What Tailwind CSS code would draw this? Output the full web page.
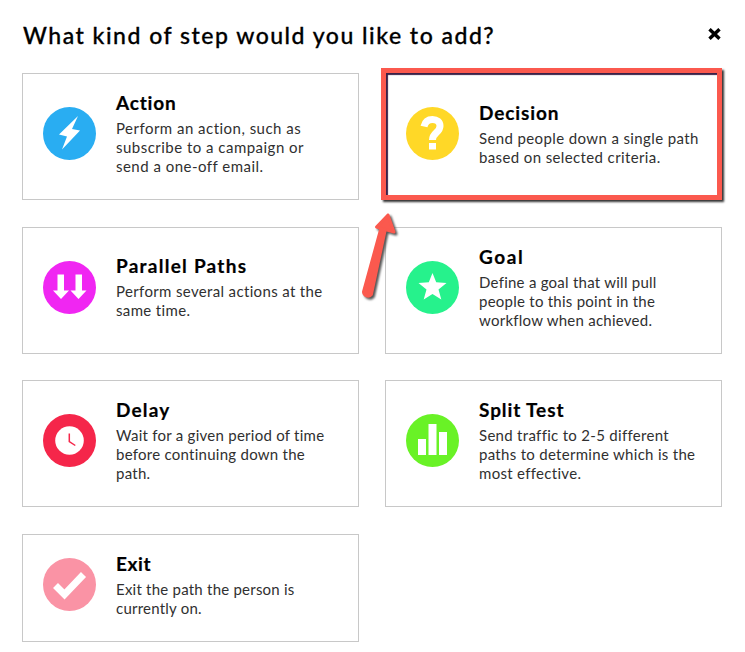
<!DOCTYPE html>
<html lang="en">
<head>
  <meta charset="UTF-8" />
  <meta name="viewport" content="width=device-width, initial-scale=1.0" />
  <title>Add a step</title>
  <script src="https://cdn.jsdelivr.net/npm/@tailwindcss/browser@4"></script>
</head>
<body class="bg-white font-['Lato',sans-serif] text-[#303030] w-[745px] h-[652px] overflow-hidden relative">
  <div class="pl-[22px] pr-[23px]">
    <header class="flex items-center justify-between h-[73px] pr-px pb-1">
      <h1 class="text-[23px] leading-none font-medium text-black tracking-[1.5px] pl-px pt-px whitespace-nowrap [-webkit-text-stroke:0.3px_#000]">What kind of step would you like to add?</h1>
      <button aria-label="Close" class="-mt-[2px]">
        <svg class="w-[13px] h-[12px]" viewBox="0 0 13 12" fill="none" stroke="#000" stroke-width="3.4"><path d="M1.500 1.200l10 9.600M11.500 1.200l-10 9.600" /></svg>
      </button>
    </header>

    <main class="grid grid-cols-[337px_337px] gap-x-[26px] gap-y-[26.67px] text-[15px] leading-[19px]">
      <section class="h-[127px] border border-[#c8c8c8] flex items-center gap-5 pl-5 pb-[6px]">
        <svg class="size-[53px] shrink-0" viewBox="0 0 53 53"><circle cx="26.5" cy="26.5" r="26.5" fill="#29adf2" /><path d="M35 9L16 27.500l8 2L19 42.500 37 23.500l-8-1.500z" fill="#fff" /></svg>
        <div class="whitespace-nowrap">
          <h2 class="text-[19px] leading-[26px] -mt-px mb-[3px] font-bold text-black tracking-[0.8px] [-webkit-text-stroke:0.2px_#000]">Action</h2>
          <p class="tracking-[0.48px]">Perform an action, such as<br>subscribe to a campaign or<br>send a one-off email.</p>
        </div>
      </section>

      <section class="h-[127px] border border-[#c8c8c8] flex items-center gap-5 pl-5 pb-[6px] relative">
        <div class="absolute -left-[5px] -top-[6px] w-[341px] h-[132px] border-[5px] border-[#fb594e] shadow-[2px_2px_2px_#333,inset_2px_2px_1px_#3a2148]"></div>
        <svg class="size-[53px] shrink-0" viewBox="0 0 53 53"><circle cx="26.5" cy="26.5" r="26.5" fill="#ffd827" /><path d="M18 19.500c1-4.500 4-7 8.500-7 4.500 0 7.500 2.500 7.500 6.500 0 7-7.500 6.500-7.500 14" fill="none" stroke="#fff" stroke-width="7" /><path d="M23 36h7v6.500h-7z" fill="#fff" /></svg>
        <div class="whitespace-nowrap">
          <h2 class="text-[19px] leading-[26px] -mt-px mb-[3px] font-bold text-black tracking-[0.9px] [-webkit-text-stroke:0.2px_#000]">Decision</h2>
          <p class="tracking-[0.38px]">Send people down a single path<br>based on selected criteria.</p>
        </div>
      </section>

      <section class="h-[127px] border border-[#c8c8c8] flex items-center gap-5 pl-5 pb-[6px]">
        <svg class="size-[53px] shrink-0" viewBox="0 0 53 53"><circle cx="26.5" cy="26.5" r="26.5" fill="#f026f2" /><path d="M14.500 13.500h6.500v16h5L18 38l-8-8.500h4.500zM32.500 13.500h6.500v16h4.500L35.500 38l-8-8.500h5z" fill="#fff" /></svg>
        <div class="whitespace-nowrap">
          <h2 class="text-[19px] leading-[26px] -mt-px mb-[3px] font-bold text-black tracking-[1.25px] [-webkit-text-stroke:0.2px_#000]">Parallel Paths</h2>
          <p class="tracking-[0.35px]">Perform several actions at the<br>same time.</p>
        </div>
      </section>

      <section class="h-[127px] border border-[#c8c8c8] flex items-center gap-5 pl-5 pb-[6px]">
        <svg class="size-[53px] shrink-0" viewBox="0 0 53 53"><circle cx="26.5" cy="26.5" r="26.5" fill="#26f28c" /><path d="M26.500 12l3.700 9.300 10.300.6-8 6.500 2.800 10.100-8.800-5.600-8.800 5.600 2.800-10.100-8-6.500 10.300-.6z" fill="#fff" /></svg>
        <div class="whitespace-nowrap">
          <h2 class="text-[19px] leading-[26px] -mt-px mb-[3px] font-bold text-black tracking-[1.6px] [-webkit-text-stroke:0.2px_#000]">Goal</h2>
          <p class="tracking-[0.25px]">Define a goal that will pull<br>people to this point in the<br>workflow when achieved.</p>
        </div>
      </section>

      <section class="h-[127px] border border-[#c8c8c8] flex items-center gap-5 pl-5 pb-[6px]">
        <svg class="size-[53px] shrink-0" viewBox="0 0 53 53"><circle cx="26.5" cy="26.5" r="26.5" fill="#f5264a" /><circle cx="26.5" cy="26.5" r="14.3" fill="#fff" /><path d="M26.300 19.500v8l6 4" fill="none" stroke="#f5264a" stroke-width="1.5" /></svg>
        <div class="whitespace-nowrap">
          <h2 class="text-[19px] leading-[26px] -mt-px mb-[3px] font-bold text-black tracking-[1.2px] [-webkit-text-stroke:0.2px_#000]">Delay</h2>
          <p class="tracking-[0.26px]">Wait for a given period of time<br>before continuing down the<br>path.</p>
        </div>
      </section>

      <section class="h-[127px] border border-[#c8c8c8] flex items-center gap-5 pl-5 pb-[6px]">
        <svg class="size-[53px] shrink-0" viewBox="0 0 53 53"><circle cx="26.5" cy="26.5" r="26.5" fill="#69f226" /><path d="M12 25h8v16h-8zM22.500 10h8v31h-8zM33 18h8v23h-8z" fill="#fff" /></svg>
        <div class="whitespace-nowrap">
          <h2 class="text-[19px] leading-[26px] -mt-px mb-[3px] font-bold text-black tracking-[0.9px] [-webkit-text-stroke:0.2px_#000]">Split Test</h2>
          <p class="tracking-[0.3px]">Send traffic to 2-5 different<br>paths to determine which is the<br>most effective.</p>
        </div>
      </section>

      <section class="h-[108px] border border-[#c8c8c8] flex items-center gap-5 pl-5 pb-[6px]">
        <svg class="size-[53px] shrink-0" viewBox="0 0 53 53"><circle cx="26.5" cy="26.5" r="26.5" fill="#fa93a5" /><path d="M12.500 27.500l9 9 19-20" fill="none" stroke="#fff" stroke-width="7" /></svg>
        <div class="whitespace-nowrap">
          <h2 class="text-[19px] leading-[26px] -mt-px mb-[3px] font-bold text-black tracking-[0.6px] [-webkit-text-stroke:0.2px_#000]">Exit</h2>
          <p class="tracking-[0.23px]">Exit the path the person is<br>currently on.</p>
        </div>
      </section>
    </main>
  </div>

  <!-- pointer to the Decision card -->
  <svg class="absolute left-[350px] top-[200px] w-[60px] h-[110px] drop-shadow-[2px_2px_1px_#555]" viewBox="0 0 60 110" fill="#fb594e" stroke="#fb594e" stroke-linejoin="round" stroke-linecap="round">
    <path d="M38 15L26.500 27l17.500 5z" stroke-width="3" />
    <path d="M31.500 30l2.500 1L20.500 94a3.500 3.500 0 0 1-6-2z" stroke-width="5" />
  </svg>
</body>
</html>
